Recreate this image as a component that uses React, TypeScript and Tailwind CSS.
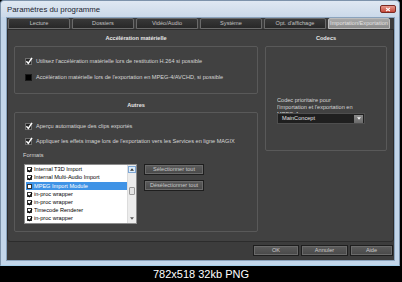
import React from 'react'

const tabs = ['Lecture', 'Dossiers', 'Vidéo/Audio', 'Système', "Opt. d'affichage", 'Importation/Exportation']

const formats = [
  { label: 'Internal T3D Import', checked: true },
  { label: 'Internal Multi-Audio Import', checked: true },
  { label: 'MPEG Import Module', checked: false, selected: true },
  { label: 'in-proc wrapper', checked: true },
  { label: 'in-proc wrapper', checked: true },
  { label: 'Timecode Renderer', checked: true },
  { label: 'in-proc wrapper', checked: true },
]

const DarkCheck = ({ checked }: { checked: boolean }) => (
  <span
    className={`relative w-[7px] h-[7px] shrink-0 ${
      checked ? 'bg-[#262626] border border-[#707070]' : 'bg-black border border-[#1a1a1a]'
    }`}
  >
    {checked && (
      <svg viewBox="0 0 8 8" className="absolute left-[-1px] top-[-2px] w-[8px] h-[8px]">
        <path d="M1.4 4.3 L3.3 6.4 L7 0.8" stroke="#fff" strokeWidth="1.5" fill="none" />
      </svg>
    )}
  </span>
)

const ListCheck = ({ checked }: { checked: boolean }) => (
  <span className="relative w-[5px] h-[5px] shrink-0 bg-white border border-[#333]">
    {checked && (
      <svg viewBox="0 0 6 6" className="absolute left-[-1px] top-[-1px] w-[6px] h-[6px]">
        <path d="M1 3 L2.4 4.6 L5 1.2" stroke="#000" strokeWidth="1.1" fill="none" />
      </svg>
    )}
  </span>
)

const Row = ({ checked, children }: { checked: boolean; children: React.ReactNode }) => (
  <div className="flex items-center h-[8px] pl-[10px] gap-[4px]">
    <DarkCheck checked={checked} />
    <span className="whitespace-nowrap">{children}</span>
  </div>
)

const DarkButton = ({ label, className }: { label: string; className: string }) => (
  <div
    className={`flex items-center justify-center h-[11px] border border-[#1e1e1e] bg-gradient-to-b from-[#5c5c5c] to-[#484848] text-[#c9c9c9] whitespace-nowrap shadow-[inset_0_0_0_1px_#6a6a6a] ${className}`}
  >
    {label}
  </div>
)

export default function App() {
  return (
    <div className="w-[402px] h-[282px] bg-black flex flex-col font-['Liberation_Sans',Arial,sans-serif] overflow-hidden">
      {/* window */}
      <div className="w-[400px] h-[266px] flex flex-col bg-[#c3d6ea] border border-[#7d93ab] border-b-[#a5d0ec] rounded-t-[4px]">
        <div className="h-[16px] flex items-start justify-between bg-gradient-to-b from-[#dfe8f2] to-[#cbd9e9] rounded-t-[4px]">
          <span className="pl-[6px] pt-[4px] text-[7.8px] leading-[9px] text-[#1c2430]">Paramètres du programme</span>
          <div className="mt-[4px] mr-[3px] w-[16px] h-[8px] rounded-[2px] border border-[#7a2a22] bg-gradient-to-b from-[#e79a8e] to-[#c4473a] flex items-center justify-center">
            <svg viewBox="0 0 8 6" className="w-[6px] h-[5px]">
              <path d="M1.5 1 L6.5 5 M6.5 1 L1.5 5" stroke="#fff" strokeWidth="1.4" />
            </svg>
          </div>
        </div>

        {/* dialog body */}
        <div className="flex-1 ml-[5px] mr-[4px] mb-[4px] bg-[#3c3c3c] flex flex-col text-[5.6px] leading-[7px] text-[#d6d6d6] border border-[#8aa3bd]">
          {/* tabs */}
          <div className="flex gap-[2px] pl-[1px] h-[11px]">
            {tabs.map((t, i) => (
              <div
                key={t}
                className={`w-[62px] h-[11px] flex items-center justify-center overflow-hidden whitespace-nowrap rounded-t-[2px] border ${
                  i === 5
                    ? 'bg-gradient-to-b from-[#a8a8a8] to-[#8a8a8a] border-[#bdbdbd] text-[#e2e2e2]'
                    : 'bg-gradient-to-b from-[#383838] to-[#282828] border-[#6a6a6a] text-[#c2c2c2]'
                }`}
              >
                {t}
              </div>
            ))}
          </div>

          {/* tab page */}
          <div className="h-[213px] bg-[#414141] border border-[#2c2c2c] rounded-b-[3px] flex gap-[7px] px-[6px]">
            {/* left column */}
            <div className="w-[244px] flex flex-col">
              <div className="h-[16px] flex items-center justify-center font-bold text-[#e6e6e6]">
                Accélération matérielle
              </div>
              <div className="h-[48px] border border-[#595959] rounded-[2px] flex flex-col pt-[10px] gap-[8px]">
                <Row checked>Utilisez l'accélération matérielle lors de restitution H.264 si possible</Row>
                <Row checked={false}>Accélération matérielle lors de l'exportation en MPEG-4/AVCHD, si possible</Row>
              </div>
              <div className="h-[18px] pt-[4px] flex items-center justify-center font-bold text-[#e6e6e6]">
                Autres
              </div>
              <div className="h-[120px] border border-[#595959] rounded-[2px] flex flex-col pt-[9px]">
                <Row checked>Aperçu automatique des clips exportés</Row>
                <div className="mt-[7px]">
                  <Row checked>Appliquer les effets image lors de l'exportation vers les Services en ligne MAGIX</Row>
                </div>
                <div className="mt-[6px] h-[8px] pl-[8px] flex items-center">Formats</div>
                <div className="mt-[5px] pl-[9px] flex gap-[7px]">
                  {/* list box */}
                  <div className="w-[113px] h-[60px] bg-white border border-[#8c8c8c] flex text-black">
                    <div className="flex-1 flex flex-col pt-[0.5px] pl-[1px]">
                      {formats.map((f, i) => (
                        <div
                          key={i}
                          className={`h-[8.3px] flex items-center gap-[2px] pl-[1px] whitespace-nowrap ${
                            f.selected ? 'bg-[#3f93e6] text-white' : ''
                          }`}
                        >
                          <ListCheck checked={f.checked} />
                          <span>{f.label}</span>
                        </div>
                      ))}
                    </div>
                    <div className="w-[9px] bg-[#ececec] border-l border-[#dcdcdc] flex flex-col items-center">
                      <div className="mt-[1px] w-[8px] h-[7px] border border-[#7fa8d6] bg-[#dfeefb] flex items-center justify-center">
                        <svg viewBox="0 0 6 4" className="w-[4px] h-[3px]">
                          <path d="M0 4 L3 0 L6 4 Z" fill="#3a3a3a" />
                        </svg>
                      </div>
                      <div className="mt-[14px] w-[6px] h-[8px] border border-[#9a9a9a] bg-[#e4e4e4] rounded-[1px]" />
                      <div className="flex-1" />
                      <div className="mb-[2px] w-[8px] h-[6px] flex items-center justify-center">
                        <svg viewBox="0 0 6 4" className="w-[4px] h-[3px]">
                          <path d="M0 0 L6 0 L3 4 Z" fill="#5a5a5a" />
                        </svg>
                      </div>
                    </div>
                  </div>
                  {/* buttons */}
                  <div className="flex flex-col gap-[5px]">
                    <DarkButton label="Sélectionner tout" className="w-[60px]" />
                    <DarkButton label="Désélectionner tout" className="w-[60px]" />
                  </div>
                </div>
              </div>
            </div>

            {/* right column */}
            <div className="w-[122px] flex flex-col">
              <div className="h-[16px] flex items-center justify-center font-bold text-[#e6e6e6]">Codecs</div>
              <div className="h-[105px] border border-[#595959] rounded-[2px] flex flex-col pl-[11px] pt-[50px]">
                <div className="h-[16px] overflow-hidden leading-[7px]">
                  <div>Codec prioritaire pour</div>
                  <div>l'importation et l'exportation en</div>
                  <div>MPEG-4 :</div>
                </div>
                <div className="w-[88px] h-[11px] bg-[#1f1f1f] border border-[#4e4e4e] flex items-center justify-between pl-[4px] pr-[1px] text-[#e0e0e0]">
                  <span>MainConcept</span>
                  <div className="w-[9px] h-[8px] bg-gradient-to-b from-[#8a8a8a] to-[#6a6a6a] flex items-center justify-center">
                    <svg viewBox="0 0 6 4" className="w-[4px] h-[3px]">
                      <path d="M0 0 L6 0 L3 4 Z" fill="#f0f0f0" />
                    </svg>
                  </div>
                </div>
              </div>
            </div>
          </div>

          {/* bottom buttons */}
          <div className="mt-[3px] flex justify-end gap-[2px] pr-[1px]">
            <DarkButton label="OK" className="w-[46px]" />
            <DarkButton label="Annuler" className="w-[47px]" />
            <DarkButton label="Aide" className="w-[43px]" />
          </div>
        </div>
      </div>

      {/* caption */}
      <div className="flex-1 flex items-center justify-center text-white text-[11px] leading-[12px]">
        782x518 32kb PNG
      </div>
    </div>
  )
}
